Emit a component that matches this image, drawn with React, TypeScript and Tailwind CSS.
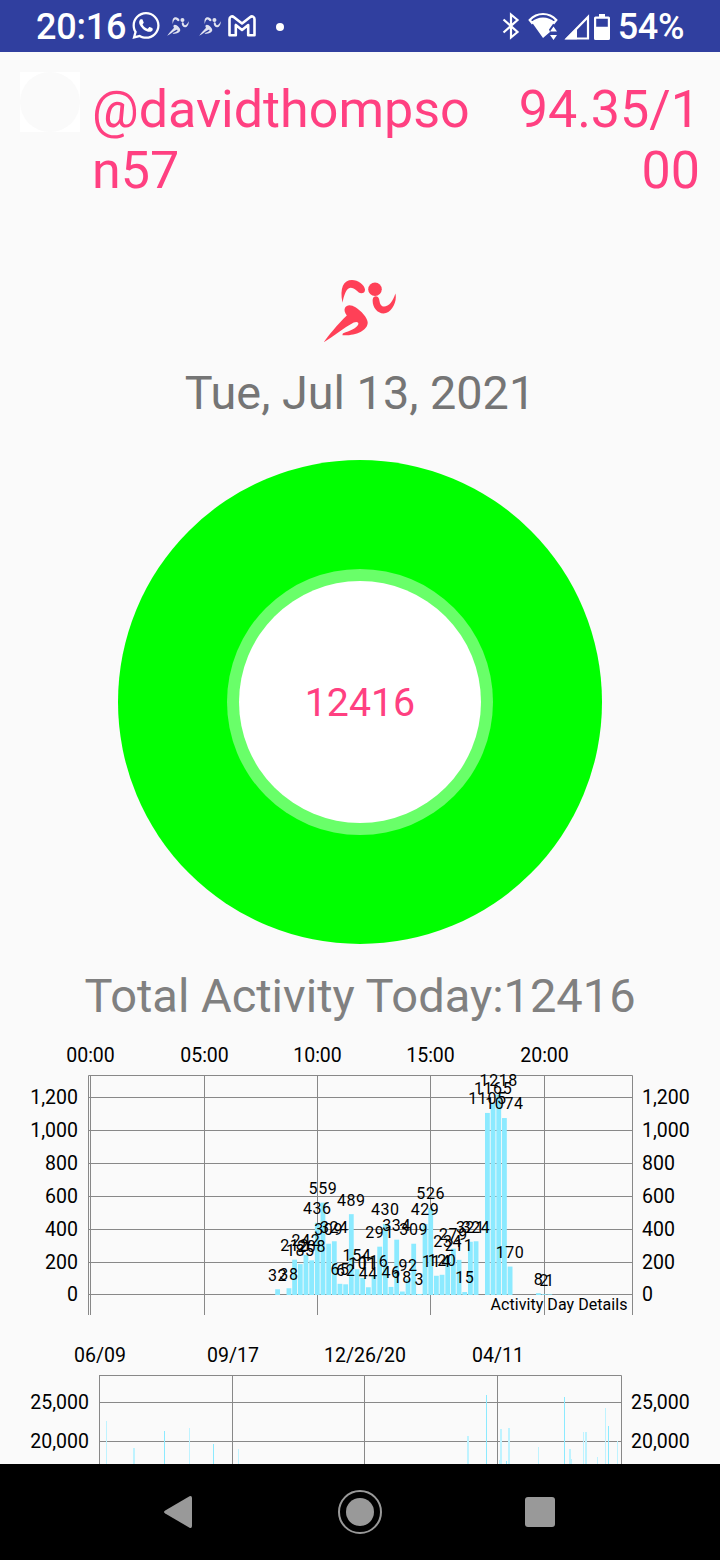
import { FaWhatsapp } from "react-icons/fa";

type DayBar = { slot: number; value: number };
type HistoryBar = { x: number; top: number; width?: number; faint?: boolean };

// one slot is 15 minutes, slot 0 is midnight
const dayBars: DayBar[] = [
  { slot: 33, value: 32 },
  { slot: 35, value: 38 },
  { slot: 36, value: 212 },
  { slot: 37, value: 185 },
  { slot: 38, value: 242 },
  { slot: 39, value: 208 },
  { slot: 40, value: 436 },
  { slot: 41, value: 559 },
  { slot: 42, value: 309 },
  { slot: 43, value: 324 },
  { slot: 44, value: 65 },
  { slot: 45, value: 62 },
  { slot: 46, value: 489 },
  { slot: 47, value: 154 },
  { slot: 48, value: 101 },
  { slot: 49, value: 44 },
  { slot: 50, value: 116 },
  { slot: 51, value: 291 },
  { slot: 52, value: 430 },
  { slot: 53, value: 46 },
  { slot: 54, value: 334 },
  { slot: 55, value: 18 },
  { slot: 56, value: 92 },
  { slot: 57, value: 309 },
  { slot: 58, value: 3 },
  { slot: 59, value: 429 },
  { slot: 60, value: 526 },
  { slot: 61, value: 114 },
  { slot: 62, value: 120 },
  { slot: 63, value: 234 },
  { slot: 64, value: 279 },
  { slot: 65, value: 211 },
  { slot: 66, value: 15 },
  { slot: 67, value: 321 },
  { slot: 68, value: 324 },
  { slot: 70, value: 1105 },
  { slot: 71, value: 1165 },
  { slot: 72, value: 1218 },
  { slot: 73, value: 1074 },
  { slot: 74, value: 170 },
  { slot: 79, value: 8 },
  { slot: 80, value: 2 },
  { slot: 81, value: 1 },
];

const dayHours = [
  { label: "00:00", x: 90.5 },
  { label: "05:00", x: 204.5 },
  { label: "10:00", x: 317.5 },
  { label: "15:00", x: 430.5 },
  { label: "20:00", x: 544.5 },
];

const dayLevels = [
  { label: "1,200", y: 62.5 },
  { label: "1,000", y: 95.5 },
  { label: "800", y: 128.5 },
  { label: "600", y: 161.5 },
  { label: "400", y: 194.5 },
  { label: "200", y: 227.5 },
  { label: "0", y: 259.5 },
];

const historyDates = [
  { label: "06/09", x: 99.5 },
  { label: "09/17", x: 232.5 },
  { label: "12/26/20", x: 364.5 },
  { label: "04/11", x: 497.5 },
];

const historyLevels = [
  { label: "25,000", y: 67.5 },
  { label: "20,000", y: 106.5 },
];

const historyBars: HistoryBar[] = [
  { x: 106, top: 86, faint: true },
  { x: 133, top: 113, width: 2, faint: true },
  { x: 164, top: 96 },
  { x: 189, top: 93, faint: true },
  { x: 213, top: 109 },
  { x: 238, top: 114, faint: true },
  { x: 467, top: 101, width: 2, faint: true },
  { x: 486, top: 60 },
  { x: 499, top: 125, faint: true },
  { x: 500, top: 94, width: 2, faint: true },
  { x: 506, top: 126 },
  { x: 508, top: 93, width: 2, faint: true },
  { x: 538, top: 112, faint: true },
  { x: 564, top: 62 },
  { x: 569, top: 114, width: 2, faint: true },
  { x: 571, top: 124, faint: true },
  { x: 583, top: 97, faint: true },
  { x: 585, top: 97, width: 2, faint: true },
  { x: 597, top: 122, faint: true },
  { x: 605, top: 73, faint: true },
  { x: 608, top: 91 },
  { x: 617, top: 106, faint: true },
];

function Runner({ className }: { className: string }) {
  return (
    <svg viewBox="0 0 74 64" className={className} fill="currentColor">
      <circle cx="52" cy="10.300" r="6.800" />
      <path d="M19.500 23.700C16.500 9 20.500 1 29 1c6 0 12.500 5 13 9.500.300 3.800-4 4.700-6.200 3C33 11 30.500 8.500 27.500 8.800c-4.500.4-6.500 7.700-8 14.900z" />
      <path d="M49.700 20.500c.5-4 5.500-4.500 6.500 0 .6 3 1 6.500 4.200 7 5 .5 9.500-5 12-13C74.500 23 68.500 34.500 60.500 34.500c-6.500 0-11.500-7-10.800-14z" />
      <path d="M.8 63.200C5.500 56.500 14 46 23.800 36.500c-2.300-3-2.800-5.500-1.800-7.700 1.800-3.600 6.500-3.200 10.500-.6C38 31.500 44.700 39 44.700 43.500c0 8.500-13 13.500-25.200 12.800 0-1.300.2-1.700.7-2 6.500-2.500 13-4.800 15-8.800 1-2.400-1.500-3.300-4.500-2C20.500 49 10.500 57.500.8 63.200z" />
    </svg>
  );
}

function StatusBar() {
  return (
    <header className="flex h-[52px] shrink-0 items-center bg-[#303f9f] pt-px pr-[36px] pl-[36px] text-[36px] font-medium text-white">
      <span className="w-[95px] pt-px tracking-[-0.2px]">20:16</span>
      <FaWhatsapp className="mb-0.5 h-[31px] w-[30px]" />
      <Runner className="ml-[6px] h-[19px] w-[22px] opacity-85" />
      <Runner className="ml-[10px] h-[19px] w-[22px] opacity-85" />
      <svg
        viewBox="0 0 28 22"
        className="mb-px ml-[7px] h-[22px] w-[28px]"
        fill="none"
        stroke="currentColor"
        strokeWidth="2.6"
        strokeLinejoin="round"
      >
        <path d="M1.500 4.200C1.500 1.500 4 .6 6 2.200l8 6.300 8-6.300c2-1.600 4.500-.7 4.500 2v16h-6.300V10L14 15 7.800 10v10.200H1.500z" />
      </svg>
      <span className="ml-[20px] size-[8px] rounded-full bg-white" />
      <div className="ml-auto flex items-center">
        <svg
          viewBox="0 0 18 28"
          className="mb-px h-[28px] w-[18px]"
          fill="none"
          stroke="currentColor"
          strokeWidth="2.2"
        >
          <path d="M1.500 7.500 15.500 20 9 25.500v-23L15.500 8 1.500 20.500" />
        </svg>
        <svg
          viewBox="0 0 30 28"
          className="mb-px ml-[8px] h-[28px] w-[30px]"
          fill="currentColor"
        >
          <path
            d="M1.700 8C9 0 21 0 28.300 8L26 11C19.500 5.200 10.500 5.200 4 11z"
            fill="none"
            stroke="currentColor"
            strokeWidth="2.2"
          />
          <path d="M4 10.500c6.500-6 15.500-6 22 0l-5 7 1 2.500-7 6z" />
          <path d="M25.500 14.500l3.500 5h-7zM25.500 28l3.500-5h-7z" />
        </svg>
        <svg viewBox="0 0 26 26" className="ml-[6px] h-[26px] w-[26px]">
          <path
            d="M24 3v21.500H3z"
            fill="none"
            stroke="currentColor"
            strokeWidth="2.2"
          />
          <path d="M13 13.500v11.800H1z" fill="currentColor" />
        </svg>
        <svg
          viewBox="0 0 16 26"
          className="ml-[4px] h-[26px] w-[16px]"
          fill="currentColor"
        >
          <path
            fillRule="evenodd"
            d="M5 0h6v2.500h3.500Q16 2.500 16 4v20.500Q16 26 14.500 26h-13Q0 26 0 24.500V4Q0 2.500 1.500 2.500H5zM2.200 4.700v8h11.600v-8z"
          />
        </svg>
        <span className="ml-[8px] pt-px tracking-[-0.4px]">54%</span>
      </div>
    </header>
  );
}

function ProfileHeader() {
  return (
    <section className="flex h-[142px] shrink-0 items-start pt-[20px] pr-[20px] pl-[20px] text-[52px] leading-[61px] text-[#ff4081]">
      <div className="mr-[12px] size-[60px] shrink-0 bg-white">
        <div className="size-full rounded-full bg-[#fafafa]" />
      </div>
      <p className="mt-[7px] w-[380px] break-all">@davidthompson57</p>
      <p className="mt-[7px] ml-auto w-[190px] text-right break-all">
        94.35/100
      </p>
    </section>
  );
}

function StepsDonut({ steps }: { steps: number }) {
  return (
    <div className="mt-[40px] flex size-[484px] shrink-0 items-center justify-center rounded-full bg-[#00ff00]">
      <div className="flex size-[266px] items-center justify-center rounded-full bg-[#69ff69]">
        <div className="flex size-[242px] items-center justify-center rounded-full bg-white pt-[2px] text-[39.3px] text-[#ff4081]">
          {steps}
        </div>
      </div>
    </div>
  );
}

function DayChart() {
  const step = 5.67;
  const barTop = (value: number) => 259.5 - value * 0.1643;

  return (
    <svg width="720" height="300" className="block shrink-0" fill="#000">
      <g stroke="#888" strokeWidth="1">
        {dayLevels.map((level) => (
          <line key={level.label} x1="88" x2="633" y1={level.y} y2={level.y} />
        ))}
        {dayHours.map((hour) => (
          <line key={hour.label} x1={hour.x} x2={hour.x} y1="40" y2="280" />
        ))}
        <path d="M88.500 280V40.500H632.500V280" fill="none" />
      </g>
      <g fill="#8ceaff">
        {dayBars.map((bar) => (
          <rect
            key={bar.slot}
            x={90.5 + bar.slot * step - 2.4}
            y={barTop(bar.value)}
            width="4.8"
            height={260 - barTop(bar.value)}
          />
        ))}
      </g>
      <g fontSize="16" textAnchor="middle" letterSpacing="0.6">
        {dayBars.map((bar) => (
          <text
            key={bar.slot}
            x={90.5 + bar.slot * step}
            y={barTop(bar.value) - 8.6}
          >
            {bar.value}
          </text>
        ))}
      </g>
      <g fontSize="19.500" textAnchor="middle">
        {dayHours.map((hour) => (
          <text key={hour.label} x={hour.x} y="27">
            {hour.label}
          </text>
        ))}
      </g>
      <g fontSize="19.500">
        {dayLevels.map((level) => (
          <g key={level.label}>
            <text x="78" y={level.y + 6.5} textAnchor="end">
              {level.label}
            </text>
            <text x="642" y={level.y + 6.5}>
              {level.label}
            </text>
          </g>
        ))}
      </g>
      <text x="627.5" y="275" fontSize="16" textAnchor="end" letterSpacing="0.05">
        Activity Day Details
      </text>
    </svg>
  );
}

function HistoryChart() {
  return (
    <svg width="720" height="129" className="block shrink-0" fill="#000">
      <g stroke="#888" strokeWidth="1">
        {historyLevels.map((level) => (
          <line key={level.label} x1="99" x2="622" y1={level.y} y2={level.y} />
        ))}
        {historyDates.map((date) => (
          <line key={date.label} x1={date.x} x2={date.x} y1="40" y2="129" />
        ))}
        <path d="M99.500 40.500H621.500V129" fill="none" />
      </g>
      {historyBars.map((bar) => (
        <rect
          key={bar.x}
          x={bar.x}
          y={bar.top}
          width={bar.width ?? 1}
          height={129 - bar.top}
          fill={bar.faint ? "#bff3ff" : "#8ceaff"}
        />
      ))}
      <g fontSize="19.500" textAnchor="middle">
        {historyDates.map((date) => (
          <text key={date.label} x={date.x + 0.5} y="27">
            {date.label}
          </text>
        ))}
      </g>
      <g fontSize="19.500">
        {historyLevels.map((level) => (
          <g key={level.label}>
            <text x="89" y={level.y + 6} textAnchor="end">
              {level.label}
            </text>
            <text x="631" y={level.y + 6}>
              {level.label}
            </text>
          </g>
        ))}
      </g>
    </svg>
  );
}

function NavigationBar() {
  return (
    <nav className="flex h-[96px] shrink-0 items-center justify-between bg-black pr-[165px] pl-[157px] text-[#999]">
      <svg viewBox="0 0 44 44" className="size-[44px]" fill="currentColor">
        <path d="M8.200 20.500 32.500 6.300Q35 5.500 35 8v28q0 2.500-2.500 1.700L8.200 23.500q-2.400-1.500 0-3z" />
      </svg>
      <div className="mr-[6px] flex size-[44px] items-center justify-center rounded-full border-2 border-current">
        <div className="size-[28px] rounded-full bg-current" />
      </div>
      <div className="size-[30px] rounded-[3px] bg-current" />
    </nav>
  );
}

export default function App() {
  const steps = 12416;

  return (
    <div className="flex h-[1560px] w-[720px] flex-col overflow-hidden bg-[#fafafa] font-[Roboto,sans-serif]">
      <StatusBar />
      <ProfileHeader />
      <main className="flex h-[1270px] shrink-0 flex-col items-center overflow-hidden">
        <Runner className="mt-[85px] h-[64px] w-[74px] shrink-0 text-[#ff4057]" />
        <p className="mt-[21px] h-[56px] text-[46.8px] leading-[58px] text-[#757575]">
          Tue, Jul 13, 2021
        </p>
        <StepsDonut steps={steps} />
        <p className="mt-[24px] mb-[11px] h-[56px] text-[47px] leading-[56px] text-[#808080]">
          Total Activity Today:{steps}
        </p>
        <DayChart />
        <HistoryChart />
      </main>
      <NavigationBar />
    </div>
  );
}
